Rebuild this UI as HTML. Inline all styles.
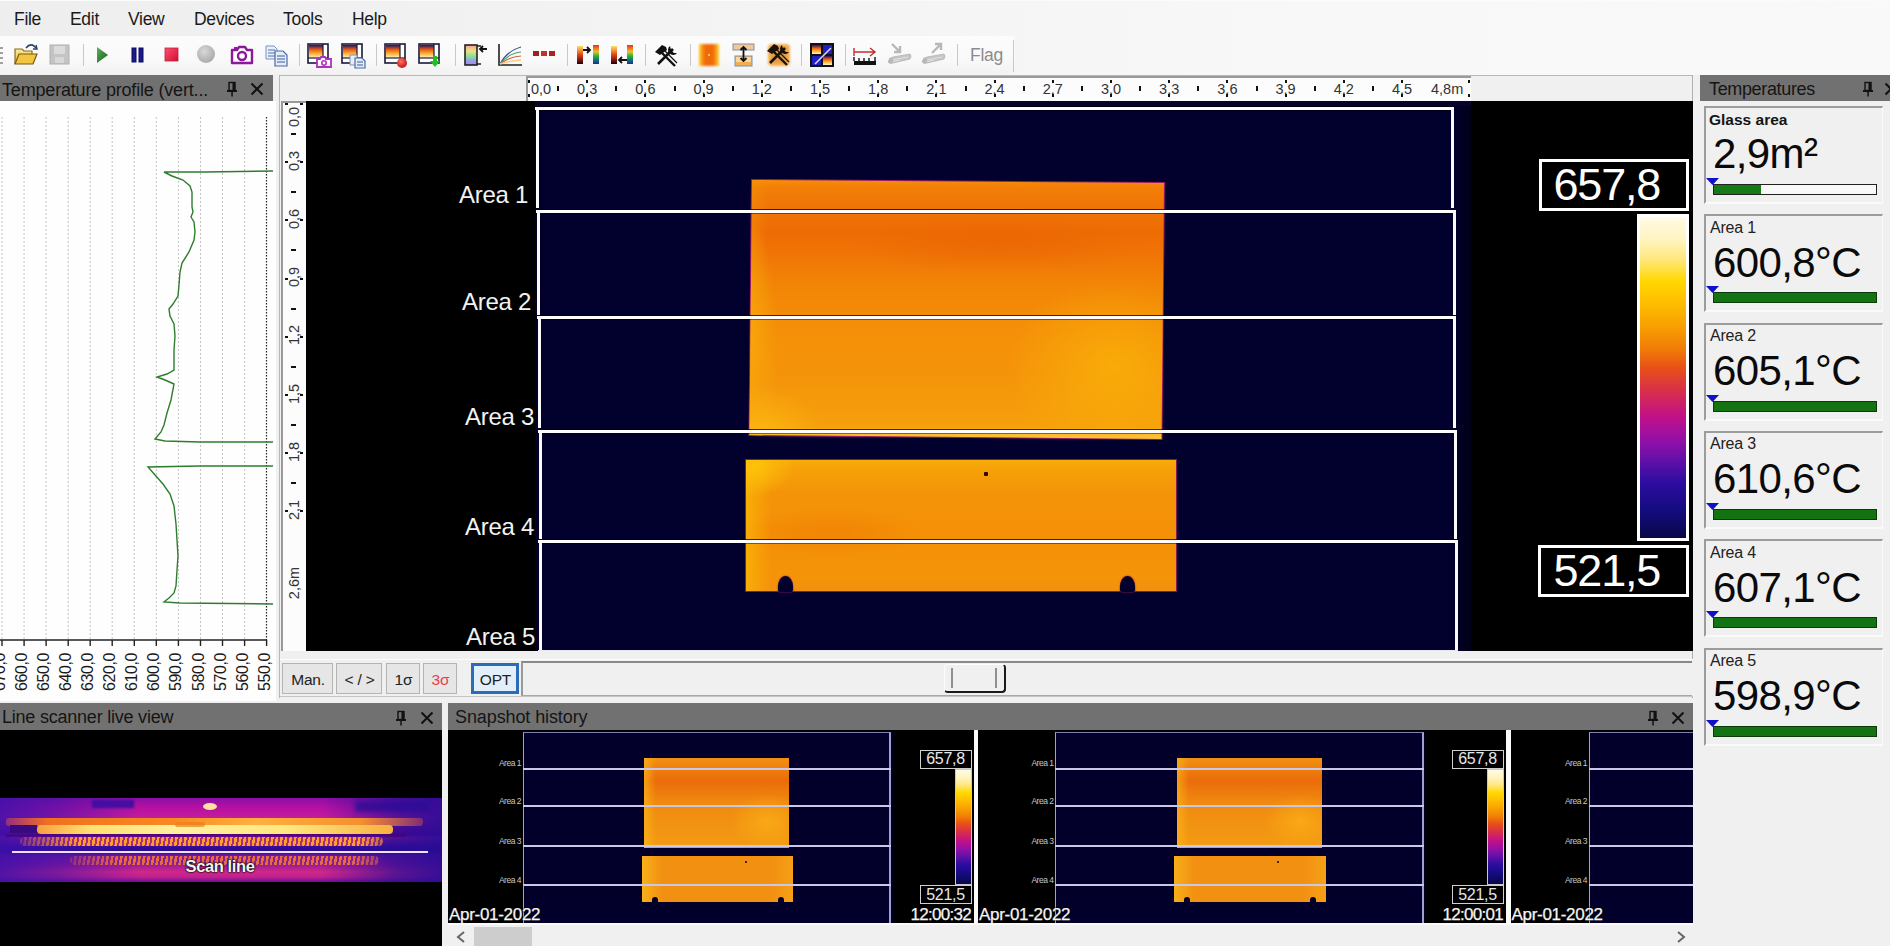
<!DOCTYPE html>
<html><head><meta charset="utf-8"><title>Thermal line scanner</title>
<style>
html,body{margin:0;padding:0;}
body{width:1890px;height:946px;overflow:hidden;position:relative;background:#f0f0f0;font-family:"Liberation Sans", sans-serif;}
.r{position:absolute;}
.t{position:absolute;white-space:nowrap;font-family:"Liberation Sans", sans-serif;}
svg{position:absolute;overflow:visible;}
</style></head><body>
<div class="r" style="left:0px;top:0px;width:1890px;height:75px;background:linear-gradient(to right, #eeeeee 0px, #f3f3f3 700px, #f8f8f8 1300px, #f9f9f9 1890px)"></div><div class="r" style="left:0px;top:0px;width:1890px;height:1px;background:#fbfbfb"></div><div class="t" style="left:14.00px;top:11.19px;font-size:17.5px;line-height:17.5px;color:#1a1a1a;letter-spacing:-0.3px;">File</div><div class="t" style="left:70.00px;top:11.19px;font-size:17.5px;line-height:17.5px;color:#1a1a1a;letter-spacing:-0.3px;">Edit</div><div class="t" style="left:128.00px;top:11.19px;font-size:17.5px;line-height:17.5px;color:#1a1a1a;letter-spacing:-0.3px;">View</div><div class="t" style="left:194.00px;top:11.19px;font-size:17.5px;line-height:17.5px;color:#1a1a1a;letter-spacing:-0.3px;">Devices</div><div class="t" style="left:283.00px;top:11.19px;font-size:17.5px;line-height:17.5px;color:#1a1a1a;letter-spacing:-0.3px;">Tools</div><div class="t" style="left:352.00px;top:11.19px;font-size:17.5px;line-height:17.5px;color:#1a1a1a;letter-spacing:-0.3px;">Help</div><svg width="0" height="0" style="position:absolute">
<defs>
<linearGradient id="gThermV" x1="0" y1="0" x2="0" y2="1">
 <stop offset="0" stop-color="#1a0a60"/><stop offset="0.25" stop-color="#e23c10"/>
 <stop offset="0.55" stop-color="#f8a010"/><stop offset="1" stop-color="#fff0a0"/></linearGradient>
<linearGradient id="gThermImg" x1="0" y1="0" x2="0" y2="1">
 <stop offset="0" stop-color="#1c1470"/><stop offset="0.35" stop-color="#f05a10"/>
 <stop offset="0.65" stop-color="#f8b030"/><stop offset="1" stop-color="#fff6d0"/></linearGradient>
<linearGradient id="gIron" x1="0" y1="0" x2="0" y2="1">
 <stop offset="0" stop-color="#ffe060"/><stop offset="0.5" stop-color="#e04010"/><stop offset="1" stop-color="#200010"/></linearGradient>
<linearGradient id="gRain" x1="0" y1="0" x2="0" y2="1">
 <stop offset="0" stop-color="#e03030"/><stop offset="0.35" stop-color="#f0c020"/><stop offset="0.6" stop-color="#20b040"/><stop offset="1" stop-color="#1030a0"/></linearGradient>
<linearGradient id="gRainSoft" x1="0" y1="0" x2="0" y2="1">
 <stop offset="0" stop-color="#f0a0a0"/><stop offset="0.3" stop-color="#f0e080"/><stop offset="0.55" stop-color="#90e090"/><stop offset="0.8" stop-color="#90a0f0"/><stop offset="1" stop-color="#c080e0"/></linearGradient>
<linearGradient id="gOrangeH" x1="0" y1="0" x2="1" y2="0">
 <stop offset="0" stop-color="#ffd030"/><stop offset="0.3" stop-color="#f06a08"/><stop offset="0.7" stop-color="#f06a08"/><stop offset="1" stop-color="#ffd030"/></linearGradient>
<linearGradient id="gFolder" x1="0" y1="0" x2="0" y2="1">
 <stop offset="0" stop-color="#fbe9a0"/><stop offset="1" stop-color="#e8b830"/></linearGradient>
<linearGradient id="gPlay" x1="0" y1="0" x2="1" y2="1">
 <stop offset="0" stop-color="#60b060"/><stop offset="1" stop-color="#106010"/></linearGradient>
<linearGradient id="gStop" x1="0" y1="0" x2="1" y2="1">
 <stop offset="0" stop-color="#ff5070"/><stop offset="1" stop-color="#d01030"/></linearGradient>
<radialGradient id="gRec" cx="0.4" cy="0.35" r="0.7">
 <stop offset="0" stop-color="#d8d8d8"/><stop offset="1" stop-color="#a8a8a8"/></radialGradient>
<radialGradient id="gRedBall" cx="0.4" cy="0.35" r="0.7">
 <stop offset="0" stop-color="#ff7060"/><stop offset="1" stop-color="#c01010"/></radialGradient>
</defs></svg><div class="r" style="left:0px;top:36px;width:1015px;height:38px;background:linear-gradient(to bottom, #fcfcfc 0%, #f9f9f9 60%, #f2f2f2 100%);border-radius:0 3px 3px 0"></div><div class="r" style="left:0px;top:47px;width:3px;height:2px;background:#a0a0a0"></div><div class="r" style="left:0px;top:52px;width:3px;height:2px;background:#a0a0a0"></div><div class="r" style="left:0px;top:57px;width:3px;height:2px;background:#a0a0a0"></div><div class="r" style="left:0px;top:62px;width:3px;height:2px;background:#a0a0a0"></div><svg style="left:13px;top:43px;" width="26" height="24" viewBox="0 0 26 24"><path d="M2 21 L2 6 L9 6 L11 8 L19 8 L19 11" fill="url(#gFolder)" stroke="#8a6a20" stroke-width="1.2"/><path d="M2 21 L6 11 L24 11 L20 21 Z" fill="#f2c640" stroke="#7a5a10" stroke-width="1.2"/><path d="M13 5 Q17 0 21 3 L23 5" fill="none" stroke="#304060" stroke-width="1.6"/><path d="M20 6 L24 6 L23 2" fill="none" stroke="#304060" stroke-width="1.4"/></svg><svg style="left:49px;top:44px;" width="22" height="22" viewBox="0 0 22 22"><rect x="1" y="1" width="19" height="19" fill="#c4c4c4" stroke="#b0b0b0"/><rect x="5" y="2" width="11" height="8" fill="#dcdcdc"/><rect x="6" y="13" width="9" height="6" fill="#d8d8d8"/></svg><div class="r" style="left:83px;top:44px;width:1px;height:22px;background:#c8c8c8"></div><svg style="left:95px;top:45px;" width="16" height="20" viewBox="0 0 16 20"><path d="M2 2 L13 10 L2 18 Z" fill="url(#gPlay)"/></svg><svg style="left:130px;top:46px;" width="16" height="18" viewBox="0 0 16 18"><rect x="2" y="2" width="4" height="14" fill="#1a1a8a" stroke="#0a0a60" stroke-width="1"/><rect x="9" y="2" width="4" height="14" fill="#1a1a8a" stroke="#0a0a60" stroke-width="1"/></svg><svg style="left:163px;top:46px;" width="18" height="18" viewBox="0 0 18 18"><rect x="2" y="2" width="13" height="13" fill="url(#gStop)" stroke="#c02040" stroke-width="0.8"/></svg><svg style="left:196px;top:44px;" width="20" height="20" viewBox="0 0 20 20"><circle cx="10" cy="10" r="9" fill="url(#gRec)"/></svg><svg style="left:229px;top:42px;" width="26" height="24" viewBox="0 0 26 24"><path d="M3 8 L8 8 L10 5 L16 5 L18 8 L23 8 L23 21 L3 21 Z" fill="#fff" stroke="#8a1a9a" stroke-width="2.4" stroke-linejoin="round"/><circle cx="13" cy="14" r="4" fill="none" stroke="#8a1a9a" stroke-width="2.4"/><rect x="5" y="5" width="3" height="2" fill="#8a1a9a"/></svg><svg style="left:265px;top:45px;" width="24" height="22" viewBox="0 0 24 22"><path d="M1 1 L9 1 L12 4 L12 14 L1 14 Z" fill="#eaf0fa" stroke="#7890c0" stroke-width="1"/><path d="M3 5 L10 5 M3 8 L10 8 M3 11 L10 11" stroke="#5070b0" stroke-width="1"/><path d="M10 6 L18 6 L22 10 L22 21 L10 21 Z" fill="#e4ecf8" stroke="#4a6aa8" stroke-width="1.2"/><path d="M12 11 L20 11 M12 14 L20 14 M12 17 L20 17" stroke="#3a5aa0" stroke-width="1.2"/></svg><div class="r" style="left:299px;top:44px;width:1px;height:22px;background:#c8c8c8"></div><svg style="left:307px;top:43px;" width="26" height="26" viewBox="0 0 26 26"><rect x="1" y="1" width="20" height="19" fill="#fff" stroke="#1a1a3a" stroke-width="1.6"/><rect x="2" y="2" width="14" height="13" fill="url(#gThermImg)"/><line x1="16" y1="1" x2="16" y2="15" stroke="#1a1a3a" stroke-width="1.2"/><line x1="1" y1="15" x2="21" y2="15" stroke="#1a1a3a" stroke-width="1.2"/><path d="M10 16 L13 16 L14 14 L18 14 L19 16 L24 16 L24 24 L10 24 Z" fill="#fff" stroke="#b030c0" stroke-width="1.8"/><circle cx="17" cy="20" r="2.2" fill="none" stroke="#b030c0" stroke-width="1.6"/></svg><svg style="left:341px;top:43px;" width="26" height="26" viewBox="0 0 26 26"><rect x="1" y="1" width="20" height="19" fill="#fff" stroke="#1a1a3a" stroke-width="1.6"/><rect x="2" y="2" width="14" height="13" fill="url(#gThermImg)"/><line x1="16" y1="1" x2="16" y2="15" stroke="#1a1a3a" stroke-width="1.2"/><line x1="1" y1="15" x2="21" y2="15" stroke="#1a1a3a" stroke-width="1.2"/><path d="M9 12 L16 12 L16 22 L9 22 Z" fill="#e8eef8" stroke="#7890c0" stroke-width="1"/><path d="M14 15 L21 15 L24 18 L24 25 L14 25 Z" fill="#e4ecf8" stroke="#4a6aa8" stroke-width="1.2"/><path d="M16 19 L22 19 M16 22 L22 22" stroke="#3a5aa0" stroke-width="1"/></svg><div class="r" style="left:376px;top:44px;width:1px;height:22px;background:#c8c8c8"></div><svg style="left:384px;top:43px;" width="26" height="26" viewBox="0 0 26 26"><rect x="1" y="1" width="20" height="19" fill="#fff" stroke="#1a1a3a" stroke-width="1.6"/><rect x="2" y="2" width="14" height="13" fill="url(#gThermImg)"/><line x1="16" y1="1" x2="16" y2="15" stroke="#1a1a3a" stroke-width="1.2"/><line x1="1" y1="15" x2="21" y2="15" stroke="#1a1a3a" stroke-width="1.2"/><circle cx="18" cy="20" r="5" fill="url(#gRedBall)"/></svg><svg style="left:418px;top:43px;" width="26" height="26" viewBox="0 0 26 26"><rect x="1" y="1" width="20" height="19" fill="#fff" stroke="#1a1a3a" stroke-width="1.6"/><rect x="2" y="2" width="14" height="13" fill="url(#gThermImg)"/><line x1="16" y1="1" x2="16" y2="15" stroke="#1a1a3a" stroke-width="1.2"/><line x1="1" y1="15" x2="21" y2="15" stroke="#1a1a3a" stroke-width="1.2"/><path d="M15 13 L19 13 L19 18 L22 18 L17 24 L12 18 L15 18 Z" fill="#20c020"/></svg><div class="r" style="left:455px;top:44px;width:1px;height:22px;background:#c8c8c8"></div><svg style="left:463px;top:43px;" width="26" height="24" viewBox="0 0 26 24"><rect x="2" y="2" width="12" height="20" fill="url(#gRainSoft)" stroke="#222" stroke-width="1.6"/><path d="M14 3 L18 3 M14 21 L18 21" stroke="#222" stroke-width="1.6"/><path d="M24 6 L17 6 M20 3 L17 6 L20 9" fill="none" stroke="#111" stroke-width="1.8"/></svg><svg style="left:497px;top:43px;" width="26" height="24" viewBox="0 0 26 24"><path d="M2 1 L2 22 L25 22" fill="none" stroke="#222" stroke-width="1.6"/><path d="M3 21 Q10 8 24 4" fill="none" stroke="#3050a0" stroke-width="1.2"/><path d="M3 21 Q12 10 24 9" fill="none" stroke="#40a060" stroke-width="1.2"/><path d="M3 21 Q12 14 24 13" fill="none" stroke="#d06040" stroke-width="1.2"/><path d="M3 21 Q12 18 24 17" fill="none" stroke="#f0d080" stroke-width="1.4"/></svg><svg style="left:531px;top:49px;" width="28" height="10" viewBox="0 0 28 10"><rect x="2" y="2" width="6" height="5" fill="#a02020"/><rect x="10" y="2" width="6" height="5" fill="#c03030"/><rect x="18" y="2" width="6" height="5" fill="#b02020"/></svg><div class="r" style="left:567px;top:44px;width:1px;height:22px;background:#c8c8c8"></div><svg style="left:575px;top:43px;" width="28" height="24" viewBox="0 0 28 24"><rect x="2" y="3" width="6" height="18" fill="url(#gIron)"/><rect x="18" y="2" width="6" height="19" fill="url(#gRain)"/><path d="M8 7 L15 7 M12 4 L15 7 L12 10" fill="none" stroke="#111" stroke-width="1.8"/></svg><svg style="left:609px;top:43px;" width="28" height="24" viewBox="0 0 28 24"><rect x="2" y="3" width="6" height="18" fill="url(#gIron)"/><rect x="18" y="2" width="6" height="19" fill="url(#gRain)"/><path d="M18 17 L10 17 M13 14 L10 17 L13 20" fill="none" stroke="#111" stroke-width="1.8"/></svg><div class="r" style="left:645px;top:44px;width:1px;height:22px;background:#c8c8c8"></div><svg style="left:654px;top:43px;" width="26" height="24" viewBox="0 0 26 24"><path d="M7 9 L21 23" stroke="#111" stroke-width="2.4"/><path d="M10 7 L23 20" stroke="#111" stroke-width="1.2"/><path d="M1 9 L8 2 L12 4 L13 7 L6 12 Z" fill="#111"/><path d="M19 6 L4 21" stroke="#111" stroke-width="2.6"/><path d="M16 3 A5 5 0 1 0 23 10 L20 10 L17 7 Z" fill="#111"/></svg><div class="r" style="left:690px;top:44px;width:1px;height:22px;background:#c8c8c8"></div><svg style="left:697px;top:43px;" width="24" height="24" viewBox="0 0 24 24"><rect x="2" y="1" width="20" height="22" fill="url(#gOrangeH)" style="filter:blur(0.8px)"/><rect x="11" y="11" width="2" height="2" fill="#f8c080"/></svg><svg style="left:731px;top:42px;" width="26" height="26" viewBox="0 0 26 26"><rect x="2" y="2" width="21" height="6" fill="#f4c890" stroke="#8090b0" stroke-width="1"/><rect x="4" y="14" width="17" height="10" fill="#f0b050" stroke="#8090b0" stroke-width="1"/><rect x="5" y="15" width="15" height="5" fill="#f8d8a0"/><path d="M12.5 5 L12.5 19 M9.5 8 L12.5 5 L15.5 8 M9.5 16 L12.5 19 L15.5 16" fill="none" stroke="#111" stroke-width="1.8"/></svg><svg style="left:766px;top:42px;" width="26" height="26" viewBox="0 0 26 26"><rect x="2" y="2" width="22" height="22" rx="4" fill="#f4b050" style="filter:blur(1.2px)"/><rect x="5" y="5" width="16" height="16" fill="#d89040" opacity="0.6" style="filter:blur(1px)"/><path d="M7 9 L21 23" stroke="#1a1208" stroke-width="2.4"/><path d="M10 7 L23 20" stroke="#1a1208" stroke-width="1.2"/><path d="M1 9 L8 2 L12 4 L13 7 L6 12 Z" fill="#1a1208"/><path d="M19 6 L4 21" stroke="#1a1208" stroke-width="2.6"/><path d="M16 3 A5 5 0 1 0 23 10 L20 10 L17 7 Z" fill="#1a1208"/></svg><div class="r" style="left:801px;top:44px;width:1px;height:22px;background:#c8c8c8"></div><svg style="left:809px;top:42px;" width="26" height="26" viewBox="0 0 26 26"><rect x="1" y="1" width="24" height="24" fill="#111"/><rect x="3" y="3" width="9" height="9" fill="url(#gThermImg)"/><rect x="14" y="3" width="9" height="9" fill="#2020c0"/><rect x="3" y="14" width="9" height="9" fill="#2020c0"/><rect x="14" y="14" width="9" height="9" fill="url(#gThermImg)"/><path d="M6 22 L22 6" stroke="#e0d0f0" stroke-width="1.6"/></svg><div class="r" style="left:845px;top:44px;width:1px;height:22px;background:#c8c8c8"></div><svg style="left:852px;top:43px;" width="28" height="24" viewBox="0 0 28 24"><path d="M2 5 L2 13 M2 9 L23 9 M18 5 L23 9 L18 13" fill="none" stroke="#c03030" stroke-width="1.4"/><rect x="2" y="18" width="22" height="4" fill="#111"/><path d="M2 14 L2 18 M7 15 L7 18 M12 15 L12 18 M17 15 L17 18 M23 14 L23 18" stroke="#111" stroke-width="1.4"/></svg><svg style="left:886px;top:42px;" width="28" height="26" viewBox="0 0 28 26"><path d="M6 2 L14 10 M14 4 L14 10 L8 10" fill="none" stroke="#b8b8b8" stroke-width="2.4"/><path d="M2 20 Q3 16 7 15 L24 12 Q26 14 24 17 L7 21 Q3 22 2 20 Z" fill="#c6c6c6" stroke="#b4b4b4" stroke-width="0.8"/><path d="M6 18 L22 15 M5 20 L14 18" stroke="#e0e0e0" stroke-width="1"/><ellipse cx="5" cy="18.5" rx="2.2" ry="3" fill="#b8b8b8"/></svg><svg style="left:920px;top:42px;" width="28" height="26" viewBox="0 0 28 26"><path d="M12 11 L21 2 M15 2 L21 2 L21 8" fill="none" stroke="#b8b8b8" stroke-width="2.4"/><path d="M2 20 Q3 16 7 15 L24 12 Q26 14 24 17 L7 21 Q3 22 2 20 Z" fill="#c6c6c6" stroke="#b4b4b4" stroke-width="0.8"/><path d="M6 18 L22 15 M5 20 L14 18" stroke="#e0e0e0" stroke-width="1"/><ellipse cx="5" cy="18.5" rx="2.2" ry="3" fill="#b8b8b8"/></svg><div class="r" style="left:957px;top:44px;width:1px;height:22px;background:#c8c8c8"></div><div class="t" style="left:970.00px;top:47.19px;font-size:17.5px;line-height:17.5px;color:#8c8c8c;letter-spacing:-0.3px;">Flag</div><div class="r" style="left:1013px;top:40px;width:1px;height:32px;background:#c8c8c8"></div><div class="r" style="left:0px;top:75px;width:273px;height:26px;background:#717171"></div><div class="t" style="left:2.00px;top:80.76px;font-size:18px;line-height:18px;color:#151515;letter-spacing:-0.18px;">Temperature profile (vert...</div><svg style="left:226px;top:80px" width="12" height="17" viewBox="0 0 12 17"><rect x="3" y="2.5" width="6" height="8" fill="none" stroke="#111" stroke-width="1.4"/><rect x="6.5" y="2.5" width="2.5" height="8" fill="#111"/><rect x="1" y="10" width="10" height="2" fill="#111"/><rect x="5.3" y="12" width="1.5" height="4.5" fill="#111"/></svg><svg style="left:250px;top:82px" width="14" height="14" viewBox="0 0 14 14"><path d="M1.5 1.5 L12.5 12.5 M12.5 1.5 L1.5 12.5" stroke="#111" stroke-width="2"/></svg><div class="r" style="left:0px;top:101px;width:276px;height:600px;background:#fefefe"></div><svg style="left:0px;top:101px" width="276" height="600" viewBox="0 101 276 600"><line x1="2.0" y1="117" x2="2.0" y2="640" stroke="#c4c4c4" stroke-width="1" stroke-dasharray="2,2"/><line x1="24.1" y1="117" x2="24.1" y2="640" stroke="#c4c4c4" stroke-width="1" stroke-dasharray="2,2"/><line x1="46.1" y1="117" x2="46.1" y2="640" stroke="#c4c4c4" stroke-width="1" stroke-dasharray="2,2"/><line x1="68.2" y1="117" x2="68.2" y2="640" stroke="#c4c4c4" stroke-width="1" stroke-dasharray="2,2"/><line x1="90.2" y1="117" x2="90.2" y2="640" stroke="#c4c4c4" stroke-width="1" stroke-dasharray="2,2"/><line x1="112.2" y1="117" x2="112.2" y2="640" stroke="#c4c4c4" stroke-width="1" stroke-dasharray="2,2"/><line x1="134.3" y1="117" x2="134.3" y2="640" stroke="#c4c4c4" stroke-width="1" stroke-dasharray="2,2"/><line x1="156.3" y1="117" x2="156.3" y2="640" stroke="#c4c4c4" stroke-width="1" stroke-dasharray="2,2"/><line x1="178.4" y1="117" x2="178.4" y2="640" stroke="#c4c4c4" stroke-width="1" stroke-dasharray="2,2"/><line x1="200.5" y1="117" x2="200.5" y2="640" stroke="#c4c4c4" stroke-width="1" stroke-dasharray="2,2"/><line x1="222.5" y1="117" x2="222.5" y2="640" stroke="#c4c4c4" stroke-width="1" stroke-dasharray="2,2"/><line x1="244.6" y1="117" x2="244.6" y2="640" stroke="#c4c4c4" stroke-width="1" stroke-dasharray="2,2"/><line x1="266.5" y1="117" x2="266.5" y2="640" stroke="#222" stroke-width="1.2" stroke-dasharray="1.5,1.5"/><line x1="0" y1="640" x2="267" y2="640" stroke="#222" stroke-width="1.5"/><line x1="2.0" y1="640" x2="2.0" y2="646" stroke="#222" stroke-width="1.4"/><line x1="24.1" y1="640" x2="24.1" y2="646" stroke="#222" stroke-width="1.4"/><line x1="46.1" y1="640" x2="46.1" y2="646" stroke="#222" stroke-width="1.4"/><line x1="68.2" y1="640" x2="68.2" y2="646" stroke="#222" stroke-width="1.4"/><line x1="90.2" y1="640" x2="90.2" y2="646" stroke="#222" stroke-width="1.4"/><line x1="112.2" y1="640" x2="112.2" y2="646" stroke="#222" stroke-width="1.4"/><line x1="134.3" y1="640" x2="134.3" y2="646" stroke="#222" stroke-width="1.4"/><line x1="156.3" y1="640" x2="156.3" y2="646" stroke="#222" stroke-width="1.4"/><line x1="178.4" y1="640" x2="178.4" y2="646" stroke="#222" stroke-width="1.4"/><line x1="200.5" y1="640" x2="200.5" y2="646" stroke="#222" stroke-width="1.4"/><line x1="222.5" y1="640" x2="222.5" y2="646" stroke="#222" stroke-width="1.4"/><line x1="244.6" y1="640" x2="244.6" y2="646" stroke="#222" stroke-width="1.4"/><line x1="266.6" y1="640" x2="266.6" y2="646" stroke="#222" stroke-width="1.4"/><polyline points="273,171 205,172 164,172 172,176 183,180 190,186 192,192 192,207 193,212 191,217 194,222 195,232 194,240 189,252 182,263 180,272 179,285 178,296 173,304 169,309 170,316 174,324 175,336 174,350 174,362 174,370 167,374 157,377 165,380 174,384 171,400 167,413 164,425 161,432 155,439 165,441 200,442 273,442" fill="none" stroke="#2e7d2e" stroke-width="1.4"/><polyline points="273,466 200,466 148,467 155,475 163,484 170,494 174,506 176,524 177,540 178,556 177,570 176,586 174,593 169,598 164,602 180,603 273,604" fill="none" stroke="#2e7d2e" stroke-width="1.4"/></svg><div class="t" style="left:0.0px;top:671.5px;font-size:16px;line-height:16px;color:#1a1a1a;letter-spacing:-0.4px;transform:translate(-50%,-50%) rotate(-90deg);">670,0</div><div class="t" style="left:22.1px;top:671.5px;font-size:16px;line-height:16px;color:#1a1a1a;letter-spacing:-0.4px;transform:translate(-50%,-50%) rotate(-90deg);">660,0</div><div class="t" style="left:44.1px;top:671.5px;font-size:16px;line-height:16px;color:#1a1a1a;letter-spacing:-0.4px;transform:translate(-50%,-50%) rotate(-90deg);">650,0</div><div class="t" style="left:66.2px;top:671.5px;font-size:16px;line-height:16px;color:#1a1a1a;letter-spacing:-0.4px;transform:translate(-50%,-50%) rotate(-90deg);">640,0</div><div class="t" style="left:88.2px;top:671.5px;font-size:16px;line-height:16px;color:#1a1a1a;letter-spacing:-0.4px;transform:translate(-50%,-50%) rotate(-90deg);">630,0</div><div class="t" style="left:110.2px;top:671.5px;font-size:16px;line-height:16px;color:#1a1a1a;letter-spacing:-0.4px;transform:translate(-50%,-50%) rotate(-90deg);">620,0</div><div class="t" style="left:132.3px;top:671.5px;font-size:16px;line-height:16px;color:#1a1a1a;letter-spacing:-0.4px;transform:translate(-50%,-50%) rotate(-90deg);">610,0</div><div class="t" style="left:154.3px;top:671.5px;font-size:16px;line-height:16px;color:#1a1a1a;letter-spacing:-0.4px;transform:translate(-50%,-50%) rotate(-90deg);">600,0</div><div class="t" style="left:176.4px;top:671.5px;font-size:16px;line-height:16px;color:#1a1a1a;letter-spacing:-0.4px;transform:translate(-50%,-50%) rotate(-90deg);">590,0</div><div class="t" style="left:198.5px;top:671.5px;font-size:16px;line-height:16px;color:#1a1a1a;letter-spacing:-0.4px;transform:translate(-50%,-50%) rotate(-90deg);">580,0</div><div class="t" style="left:220.5px;top:671.5px;font-size:16px;line-height:16px;color:#1a1a1a;letter-spacing:-0.4px;transform:translate(-50%,-50%) rotate(-90deg);">570,0</div><div class="t" style="left:242.6px;top:671.5px;font-size:16px;line-height:16px;color:#1a1a1a;letter-spacing:-0.4px;transform:translate(-50%,-50%) rotate(-90deg);">560,0</div><div class="t" style="left:264.6px;top:671.5px;font-size:16px;line-height:16px;color:#1a1a1a;letter-spacing:-0.4px;transform:translate(-50%,-50%) rotate(-90deg);">550,0</div><div class="r" style="left:279px;top:75px;width:1414px;height:623px;background:#f0f0f0;border-left:1px solid #b8b8b8;border-top:1px solid #b8b8b8;box-sizing:border-box"></div><div class="r" style="left:526px;top:76px;width:945px;height:25px;background:#fcfcfc;border-top:2px solid #9a9a9a;border-left:2px solid #9a9a9a;box-sizing:border-box"></div><div class="r" style="left:281px;top:101px;width:25px;height:550px;background:#fcfcfc;border-left:2px solid #9a9a9a;border-top:2px solid #9a9a9a;box-sizing:border-box"></div><div class="r" style="left:1692px;top:75px;width:1px;height:623px;background:#b0b0b0"></div><div class="r" style="left:306px;top:101px;width:1387px;height:550px;background:#000"></div><div class="r" style="left:535px;top:101px;width:936px;height:550px;background:linear-gradient(to right, #020024 0px, #02002c 10px, #02002c 918px, #010018 936px)"></div><div class="r" style="left:535px;top:101px;width:936px;height:5px;background:#06042a"></div><div class="t" style="left:541.00px;top:81.73px;font-size:14.5px;line-height:14.5px;color:#333;transform:translateX(-50%);">0,0</div><div class="r" style="left:528px;top:80px;width:2px;height:3px;background:#111"></div><div class="r" style="left:528px;top:94px;width:2px;height:3px;background:#111"></div><div class="r" style="left:557px;top:86px;width:2px;height:5px;background:#111"></div><div class="t" style="left:587.20px;top:81.73px;font-size:14.5px;line-height:14.5px;color:#333;transform:translateX(-50%);">0,3</div><div class="r" style="left:586px;top:80px;width:2px;height:3px;background:#111"></div><div class="r" style="left:586px;top:94px;width:2px;height:3px;background:#111"></div><div class="r" style="left:615px;top:86px;width:2px;height:5px;background:#111"></div><div class="t" style="left:645.40px;top:81.73px;font-size:14.5px;line-height:14.5px;color:#333;transform:translateX(-50%);">0,6</div><div class="r" style="left:644px;top:80px;width:2px;height:3px;background:#111"></div><div class="r" style="left:644px;top:94px;width:2px;height:3px;background:#111"></div><div class="r" style="left:674px;top:86px;width:2px;height:5px;background:#111"></div><div class="t" style="left:703.60px;top:81.73px;font-size:14.5px;line-height:14.5px;color:#333;transform:translateX(-50%);">0,9</div><div class="r" style="left:703px;top:80px;width:2px;height:3px;background:#111"></div><div class="r" style="left:703px;top:94px;width:2px;height:3px;background:#111"></div><div class="r" style="left:732px;top:86px;width:2px;height:5px;background:#111"></div><div class="t" style="left:761.80px;top:81.73px;font-size:14.5px;line-height:14.5px;color:#333;transform:translateX(-50%);">1,2</div><div class="r" style="left:761px;top:80px;width:2px;height:3px;background:#111"></div><div class="r" style="left:761px;top:94px;width:2px;height:3px;background:#111"></div><div class="r" style="left:790px;top:86px;width:2px;height:5px;background:#111"></div><div class="t" style="left:820.00px;top:81.73px;font-size:14.5px;line-height:14.5px;color:#333;transform:translateX(-50%);">1,5</div><div class="r" style="left:819px;top:80px;width:2px;height:3px;background:#111"></div><div class="r" style="left:819px;top:94px;width:2px;height:3px;background:#111"></div><div class="r" style="left:848px;top:86px;width:2px;height:5px;background:#111"></div><div class="t" style="left:878.20px;top:81.73px;font-size:14.5px;line-height:14.5px;color:#333;transform:translateX(-50%);">1,8</div><div class="r" style="left:877px;top:80px;width:2px;height:3px;background:#111"></div><div class="r" style="left:877px;top:94px;width:2px;height:3px;background:#111"></div><div class="r" style="left:906px;top:86px;width:2px;height:5px;background:#111"></div><div class="t" style="left:936.40px;top:81.73px;font-size:14.5px;line-height:14.5px;color:#333;transform:translateX(-50%);">2,1</div><div class="r" style="left:935px;top:80px;width:2px;height:3px;background:#111"></div><div class="r" style="left:935px;top:94px;width:2px;height:3px;background:#111"></div><div class="r" style="left:965px;top:86px;width:2px;height:5px;background:#111"></div><div class="t" style="left:994.60px;top:81.73px;font-size:14.5px;line-height:14.5px;color:#333;transform:translateX(-50%);">2,4</div><div class="r" style="left:994px;top:80px;width:2px;height:3px;background:#111"></div><div class="r" style="left:994px;top:94px;width:2px;height:3px;background:#111"></div><div class="r" style="left:1023px;top:86px;width:2px;height:5px;background:#111"></div><div class="t" style="left:1052.80px;top:81.73px;font-size:14.5px;line-height:14.5px;color:#333;transform:translateX(-50%);">2,7</div><div class="r" style="left:1052px;top:80px;width:2px;height:3px;background:#111"></div><div class="r" style="left:1052px;top:94px;width:2px;height:3px;background:#111"></div><div class="r" style="left:1081px;top:86px;width:2px;height:5px;background:#111"></div><div class="t" style="left:1111.00px;top:81.73px;font-size:14.5px;line-height:14.5px;color:#333;transform:translateX(-50%);">3,0</div><div class="r" style="left:1110px;top:80px;width:2px;height:3px;background:#111"></div><div class="r" style="left:1110px;top:94px;width:2px;height:3px;background:#111"></div><div class="r" style="left:1139px;top:86px;width:2px;height:5px;background:#111"></div><div class="t" style="left:1169.20px;top:81.73px;font-size:14.5px;line-height:14.5px;color:#333;transform:translateX(-50%);">3,3</div><div class="r" style="left:1168px;top:80px;width:2px;height:3px;background:#111"></div><div class="r" style="left:1168px;top:94px;width:2px;height:3px;background:#111"></div><div class="r" style="left:1197px;top:86px;width:2px;height:5px;background:#111"></div><div class="t" style="left:1227.40px;top:81.73px;font-size:14.5px;line-height:14.5px;color:#333;transform:translateX(-50%);">3,6</div><div class="r" style="left:1226px;top:80px;width:2px;height:3px;background:#111"></div><div class="r" style="left:1226px;top:94px;width:2px;height:3px;background:#111"></div><div class="r" style="left:1256px;top:86px;width:2px;height:5px;background:#111"></div><div class="t" style="left:1285.60px;top:81.73px;font-size:14.5px;line-height:14.5px;color:#333;transform:translateX(-50%);">3,9</div><div class="r" style="left:1285px;top:80px;width:2px;height:3px;background:#111"></div><div class="r" style="left:1285px;top:94px;width:2px;height:3px;background:#111"></div><div class="r" style="left:1314px;top:86px;width:2px;height:5px;background:#111"></div><div class="t" style="left:1343.80px;top:81.73px;font-size:14.5px;line-height:14.5px;color:#333;transform:translateX(-50%);">4,2</div><div class="r" style="left:1343px;top:80px;width:2px;height:3px;background:#111"></div><div class="r" style="left:1343px;top:94px;width:2px;height:3px;background:#111"></div><div class="r" style="left:1372px;top:86px;width:2px;height:5px;background:#111"></div><div class="t" style="left:1402.00px;top:81.73px;font-size:14.5px;line-height:14.5px;color:#333;transform:translateX(-50%);">4,5</div><div class="r" style="left:1401px;top:80px;width:2px;height:3px;background:#111"></div><div class="r" style="left:1401px;top:94px;width:2px;height:3px;background:#111"></div><div class="t" style="left:1431.00px;top:81.73px;font-size:14.5px;line-height:14.5px;color:#333;">4,8m</div><div class="r" style="left:1468px;top:80px;width:2px;height:3px;background:#111"></div><div class="r" style="left:1468px;top:94px;width:2px;height:3px;background:#111"></div><div class="t" style="left:293.5px;top:117px;font-size:14.5px;line-height:14.5px;color:#333;transform:translate(-50%,-50%) rotate(-90deg);">0,0</div><div class="r" style="left:291px;top:133px;width:5px;height:2px;background:#111"></div><div class="t" style="left:293.5px;top:160.7px;font-size:14.5px;line-height:14.5px;color:#333;transform:translate(-50%,-50%) rotate(-90deg);">0,3</div><div class="r" style="left:285px;top:161px;width:3px;height:2px;background:#111"></div><div class="r" style="left:300px;top:161px;width:3px;height:2px;background:#111"></div><div class="r" style="left:291px;top:191px;width:5px;height:2px;background:#111"></div><div class="t" style="left:293.5px;top:218.9px;font-size:14.5px;line-height:14.5px;color:#333;transform:translate(-50%,-50%) rotate(-90deg);">0,6</div><div class="r" style="left:285px;top:219px;width:3px;height:2px;background:#111"></div><div class="r" style="left:300px;top:219px;width:3px;height:2px;background:#111"></div><div class="r" style="left:291px;top:249px;width:5px;height:2px;background:#111"></div><div class="t" style="left:293.5px;top:277.1px;font-size:14.5px;line-height:14.5px;color:#333;transform:translate(-50%,-50%) rotate(-90deg);">0,9</div><div class="r" style="left:285px;top:278px;width:3px;height:2px;background:#111"></div><div class="r" style="left:300px;top:278px;width:3px;height:2px;background:#111"></div><div class="r" style="left:291px;top:308px;width:5px;height:2px;background:#111"></div><div class="t" style="left:293.5px;top:335.3px;font-size:14.5px;line-height:14.5px;color:#333;transform:translate(-50%,-50%) rotate(-90deg);">1,2</div><div class="r" style="left:285px;top:336px;width:3px;height:2px;background:#111"></div><div class="r" style="left:300px;top:336px;width:3px;height:2px;background:#111"></div><div class="r" style="left:291px;top:366px;width:5px;height:2px;background:#111"></div><div class="t" style="left:293.5px;top:393.5px;font-size:14.5px;line-height:14.5px;color:#333;transform:translate(-50%,-50%) rotate(-90deg);">1,5</div><div class="r" style="left:285px;top:394px;width:3px;height:2px;background:#111"></div><div class="r" style="left:300px;top:394px;width:3px;height:2px;background:#111"></div><div class="r" style="left:291px;top:424px;width:5px;height:2px;background:#111"></div><div class="t" style="left:293.5px;top:451.70000000000005px;font-size:14.5px;line-height:14.5px;color:#333;transform:translate(-50%,-50%) rotate(-90deg);">1,8</div><div class="r" style="left:285px;top:452px;width:3px;height:2px;background:#111"></div><div class="r" style="left:300px;top:452px;width:3px;height:2px;background:#111"></div><div class="r" style="left:291px;top:482px;width:5px;height:2px;background:#111"></div><div class="t" style="left:293.5px;top:509.9000000000001px;font-size:14.5px;line-height:14.5px;color:#333;transform:translate(-50%,-50%) rotate(-90deg);">2,1</div><div class="r" style="left:285px;top:510px;width:3px;height:2px;background:#111"></div><div class="r" style="left:300px;top:510px;width:3px;height:2px;background:#111"></div><div class="r" style="left:285px;top:103px;width:3px;height:2px;background:#111"></div><div class="r" style="left:300px;top:103px;width:3px;height:2px;background:#111"></div><div class="t" style="left:293.5px;top:583px;font-size:14.5px;line-height:14.5px;color:#333;transform:translate(-50%,-50%) rotate(-90deg);">2,6m</div><div class="r" style="left:747px;top:179px;width:419px;height:262px;background:#9a1a6a;clip-path:polygon(4px 0px, 418px 3px, 415.5px 261px, 1.5px 257px);"></div><div class="r" style="left:748px;top:180px;width:417px;height:260px;background:radial-gradient(ellipse 26% 34% at 88% 72%, rgba(250,176,8,0.85), rgba(250,176,8,0) 100%),radial-gradient(ellipse 60px 45px at 3% 97%, rgba(252,186,16,0.8), rgba(252,186,16,0) 100%),radial-gradient(ellipse 30px 120px at 0% 62%, rgba(250,172,10,0.75), rgba(250,172,10,0) 100%),radial-gradient(ellipse 35% 12% at 60% 24%, rgba(232,96,2,0.5), rgba(232,96,2,0) 100%),linear-gradient(to right, rgba(246,150,10,0.5) 0px, rgba(246,150,10,0) 20px),linear-gradient(to bottom, #f68e08 0%, #f27e06 3%, #f07606 10%, #ee6c04 20%, #f07406 28%, #f28406 40%, #f48e08 55%, #f4940a 75%, #f6a00c 95%, #f9b820 97%, #fcc848 100%);clip-path:polygon(4px 0px, 416px 3px, 413.5px 259px, 1.5px 255px);"></div><div class="r" style="left:745.5px;top:460px;width:430px;height:131px;background:radial-gradient(ellipse 40px 30px at 2% 5%, rgba(255,196,8,0.9), rgba(255,196,8,0) 100%),radial-gradient(ellipse 90px 25px at 20% 55%, rgba(238,120,4,0.5), rgba(238,120,4,0) 100%),linear-gradient(to right, rgba(250,180,8,0.8) 0px, rgba(250,180,8,0) 25px),linear-gradient(to bottom, #f8ac08 0%, #f6a008 8%, #f49408 25%, #f49006 60%, #f49408 90%, #f29010 100%);box-shadow:0 0 0 1px rgba(150,30,100,0.85);"></div><div class="r" style="left:777.5px;top:575.5px;width:15px;height:16.5px;background:#02002c;border-radius:50% 50% 2px 2px / 65% 65% 2px 2px;box-shadow:0 0 1px 0.5px rgba(160,30,90,0.7)"></div><div class="r" style="left:1120.0px;top:575.5px;width:15px;height:16.5px;background:#02002c;border-radius:50% 50% 2px 2px / 65% 65% 2px 2px;box-shadow:0 0 1px 0.5px rgba(160,30,90,0.7)"></div><div class="r" style="left:983.5px;top:471.5px;width:4px;height:4px;background:#2a0806;border-radius:1px"></div><div class="r" style="left:535px;top:106.0px;width:919px;height:1.5px;background:rgba(0,0,0,0.75)"></div><div class="r" style="left:535px;top:110.0px;width:919px;height:1.2px;background:rgba(0,0,0,0.45)"></div><div class="r" style="left:535px;top:107.0px;width:919px;height:3px;background:#fdfdff"></div><div class="r" style="left:535.5px;top:107.0px;width:3.5px;height:101.0px;background:#fbfbff"></div><div class="r" style="left:1450.5px;top:107.0px;width:3.5px;height:101.0px;background:#fbfbff"></div><div class="r" style="left:536px;top:208.5px;width:920px;height:1.5px;background:rgba(0,0,0,0.75)"></div><div class="r" style="left:536px;top:212.5px;width:920px;height:1.2px;background:rgba(0,0,0,0.45)"></div><div class="r" style="left:536px;top:209.5px;width:920px;height:3px;background:#fdfdff"></div><div class="r" style="left:536.5px;top:209.5px;width:3.5px;height:105.30000000000001px;background:#fbfbff"></div><div class="r" style="left:1452.5px;top:209.5px;width:3.5px;height:105.30000000000001px;background:#fbfbff"></div><div class="r" style="left:537px;top:315.3px;width:919px;height:1.5px;background:rgba(0,0,0,0.75)"></div><div class="r" style="left:537px;top:319.3px;width:919px;height:1.2px;background:rgba(0,0,0,0.45)"></div><div class="r" style="left:537px;top:316.3px;width:919px;height:3px;background:#fdfdff"></div><div class="r" style="left:537.5px;top:316.3px;width:3.5px;height:111.69999999999999px;background:#fbfbff"></div><div class="r" style="left:1452.5px;top:316.3px;width:3.5px;height:111.69999999999999px;background:#fbfbff"></div><div class="r" style="left:538px;top:428.5px;width:919px;height:1.5px;background:rgba(0,0,0,0.75)"></div><div class="r" style="left:538px;top:432.5px;width:919px;height:1.2px;background:rgba(0,0,0,0.45)"></div><div class="r" style="left:538px;top:429.5px;width:919px;height:3px;background:#fdfdff"></div><div class="r" style="left:538.5px;top:429.5px;width:3.5px;height:109.0px;background:#fbfbff"></div><div class="r" style="left:1453.5px;top:429.5px;width:3.5px;height:109.0px;background:#fbfbff"></div><div class="r" style="left:538px;top:539.0px;width:920px;height:1.5px;background:rgba(0,0,0,0.75)"></div><div class="r" style="left:538px;top:543.0px;width:920px;height:1.2px;background:rgba(0,0,0,0.45)"></div><div class="r" style="left:538px;top:540.0px;width:920px;height:3px;background:#fdfdff"></div><div class="r" style="left:538.5px;top:540.0px;width:3.5px;height:110.0px;background:#fbfbff"></div><div class="r" style="left:1454.5px;top:540.0px;width:3.5px;height:110.0px;background:#fbfbff"></div><div class="r" style="left:538px;top:649.5px;width:920px;height:1.5px;background:#e8e8f0"></div><div class="t" style="left:528.00px;top:183.18px;font-size:24px;line-height:24px;color:#f2f2f2;transform:translateX(-100%);letter-spacing:-0.3px;text-shadow:0 0 1px #000;">Area 1</div><div class="t" style="left:531.00px;top:289.68px;font-size:24px;line-height:24px;color:#f2f2f2;transform:translateX(-100%);letter-spacing:-0.3px;text-shadow:0 0 1px #000;">Area 2</div><div class="t" style="left:534.00px;top:405.18px;font-size:24px;line-height:24px;color:#f2f2f2;transform:translateX(-100%);letter-spacing:-0.3px;text-shadow:0 0 1px #000;">Area 3</div><div class="t" style="left:534.00px;top:515.18px;font-size:24px;line-height:24px;color:#f2f2f2;transform:translateX(-100%);letter-spacing:-0.3px;text-shadow:0 0 1px #000;">Area 4</div><div class="t" style="left:535.00px;top:624.68px;font-size:24px;line-height:24px;color:#f2f2f2;transform:translateX(-100%);letter-spacing:-0.3px;text-shadow:0 0 1px #000;">Area 5</div><div class="r" style="left:1539px;top:159px;width:150px;height:52px;background:#000;border:3px solid #fff;box-sizing:border-box"></div><div class="t" style="left:1553.50px;top:162.41px;font-size:45px;line-height:45px;color:#fff;letter-spacing:-1.2px;">657,8</div><div class="r" style="left:1637px;top:214px;width:52px;height:327px;background:linear-gradient(to bottom, #fffbe6 0%, #fff4c0 7%, #ffe880 13%, #ffd800 20%, #ffc000 26%, #f8a000 34%, #f07a08 41.5%, #e85018 47%, #d83048 54%, #c0108a 62.5%, #9010a8 70%, #6010a8 76%, #2c0ca0 83%, #140c80 91%, #080848 100%);border:3px solid #fff;box-sizing:border-box"></div><div class="r" style="left:1538px;top:545px;width:151px;height:52px;background:#000;border:3px solid #fff;box-sizing:border-box"></div><div class="t" style="left:1553.50px;top:548.41px;font-size:45px;line-height:45px;color:#fff;letter-spacing:-1.2px;">521,5</div><div class="r" style="left:280px;top:659px;width:1413px;height:38px;background:#f0f0f0;border-top:1px solid #fdfdfd;border-bottom:1px solid #c4c4c4;box-sizing:border-box"></div><div class="r" style="left:282px;top:663px;width:51px;height:31px;background:#e6e6e6;border:1px solid #b4b4b4;box-sizing:border-box"></div><div class="t" style="left:308.00px;top:672.38px;font-size:15.5px;line-height:15.5px;color:#222;transform:translateX(-50%);letter-spacing:-0.2px;">Man.</div><div class="r" style="left:336px;top:663px;width:46px;height:31px;background:#e6e6e6;border:1px solid #b4b4b4;box-sizing:border-box"></div><div class="t" style="left:359.50px;top:672.38px;font-size:15.5px;line-height:15.5px;color:#222;transform:translateX(-50%);letter-spacing:-0.2px;">&lt; / &gt;</div><div class="r" style="left:386px;top:663px;width:34px;height:31px;background:#e6e6e6;border:1px solid #b4b4b4;box-sizing:border-box"></div><div class="t" style="left:403.50px;top:672.38px;font-size:15.5px;line-height:15.5px;color:#222;transform:translateX(-50%);letter-spacing:-0.2px;">1σ</div><div class="r" style="left:423px;top:663px;width:34px;height:31px;background:#e6e6e6;border:1px solid #b4b4b4;box-sizing:border-box"></div><div class="t" style="left:440.50px;top:672.38px;font-size:15.5px;line-height:15.5px;color:#e8404a;transform:translateX(-50%);letter-spacing:-0.2px;">3σ</div><div class="r" style="left:471px;top:663px;width:48px;height:31px;background:#e2eefa;border:3px solid #2a6cb8;box-sizing:border-box"></div><div class="t" style="left:495.50px;top:672.38px;font-size:15.5px;line-height:15.5px;color:#222;transform:translateX(-50%);letter-spacing:-0.2px;">OPT</div><div class="r" style="left:521px;top:661px;width:1171px;height:35px;background:#f0f0f0;border-top:2px solid #8a8a8a;border-left:2px solid #9a9a9a;border-bottom:1px solid #a8a8a8;box-sizing:border-box"></div><div class="r" style="left:944px;top:664px;width:62px;height:29px;background:#f0f0f0;border-top:1px solid #fcfcfc;border-left:1px solid #fcfcfc;border-right:2.5px solid #1a1a1a;border-bottom:2.5px solid #1a1a1a;border-radius:4px;box-sizing:border-box"></div><div class="r" style="left:951px;top:668px;width:1.5px;height:20px;background:#909090"></div><div class="r" style="left:995px;top:668px;width:1.5px;height:20px;background:#909090"></div><div class="r" style="left:1693px;top:75px;width:197px;height:871px;background:#f0f0f0"></div><div class="r" style="left:1700px;top:75px;width:190px;height:26px;background:#717171"></div><div class="t" style="left:1709.00px;top:80.26px;font-size:18px;line-height:18px;color:#151515;letter-spacing:-0.35px;">Temperatures</div><svg style="left:1862px;top:80px" width="12" height="17" viewBox="0 0 12 17"><rect x="3" y="2.5" width="6" height="8" fill="none" stroke="#111" stroke-width="1.4"/><rect x="6.5" y="2.5" width="2.5" height="8" fill="#111"/><rect x="1" y="10" width="10" height="2" fill="#111"/><rect x="5.3" y="12" width="1.5" height="4.5" fill="#111"/></svg><svg style="left:1884px;top:82px" width="14" height="14" viewBox="0 0 14 14"><path d="M1.5 1.5 L12.5 12.5 M12.5 1.5 L1.5 12.5" stroke="#111" stroke-width="2"/></svg><div class="r" style="left:1704px;top:106.0px;width:179px;height:98px;background:#f0f0f0;border-top:2px solid #9c9c9c;border-left:2px solid #9c9c9c;border-right:1px solid #fafafa;border-bottom:2px solid #fafafa;box-sizing:border-box"></div><div class="t" style="left:1709.00px;top:111.88px;font-size:15.5px;line-height:15.5px;color:#151515;font-weight:bold;">Glass area</div><div class="t" style="left:1713.00px;top:133.45px;font-size:42px;line-height:42px;color:#0a0a0a;letter-spacing:-0.6px;">2,9m²</div><div class="r" style="left:1713px;top:184.0px;width:164px;height:11px;background:#f8f8f8;border:1.5px solid #222;box-sizing:border-box"></div><div class="r" style="left:1714px;top:185.0px;width:47px;height:9px;background:#157a15"></div><svg style="left:1706px;top:178.0px" width="14" height="7" viewBox="0 0 14 7"><path d="M0 0 L13 0 L6.5 7 Z" fill="#1010c8"/></svg><div class="r" style="left:1704px;top:214.3px;width:179px;height:98px;background:#f0f0f0;border-top:2px solid #9c9c9c;border-left:2px solid #9c9c9c;border-right:1px solid #fafafa;border-bottom:2px solid #fafafa;box-sizing:border-box"></div><div class="t" style="left:1710.00px;top:219.76px;font-size:16px;line-height:16px;color:#222;letter-spacing:-0.2px;">Area 1</div><div class="t" style="left:1713.00px;top:241.75px;font-size:42px;line-height:42px;color:#0a0a0a;letter-spacing:-0.6px;">600,8°C</div><div class="r" style="left:1713px;top:292.3px;width:164px;height:11px;background:#137313;border:1.5px solid #0b3a0b;box-sizing:border-box"></div><svg style="left:1706px;top:286.3px" width="14" height="7" viewBox="0 0 14 7"><path d="M0 0 L13 0 L6.5 7 Z" fill="#1010c8"/></svg><div class="r" style="left:1704px;top:322.6px;width:179px;height:98px;background:#f0f0f0;border-top:2px solid #9c9c9c;border-left:2px solid #9c9c9c;border-right:1px solid #fafafa;border-bottom:2px solid #fafafa;box-sizing:border-box"></div><div class="t" style="left:1710.00px;top:328.06px;font-size:16px;line-height:16px;color:#222;letter-spacing:-0.2px;">Area 2</div><div class="t" style="left:1713.00px;top:350.05px;font-size:42px;line-height:42px;color:#0a0a0a;letter-spacing:-0.6px;">605,1°C</div><div class="r" style="left:1713px;top:400.6px;width:164px;height:11px;background:#137313;border:1.5px solid #0b3a0b;box-sizing:border-box"></div><svg style="left:1706px;top:394.6px" width="14" height="7" viewBox="0 0 14 7"><path d="M0 0 L13 0 L6.5 7 Z" fill="#1010c8"/></svg><div class="r" style="left:1704px;top:430.9px;width:179px;height:98px;background:#f0f0f0;border-top:2px solid #9c9c9c;border-left:2px solid #9c9c9c;border-right:1px solid #fafafa;border-bottom:2px solid #fafafa;box-sizing:border-box"></div><div class="t" style="left:1710.00px;top:436.36px;font-size:16px;line-height:16px;color:#222;letter-spacing:-0.2px;">Area 3</div><div class="t" style="left:1713.00px;top:458.35px;font-size:42px;line-height:42px;color:#0a0a0a;letter-spacing:-0.6px;">610,6°C</div><div class="r" style="left:1713px;top:508.9px;width:164px;height:11px;background:#137313;border:1.5px solid #0b3a0b;box-sizing:border-box"></div><svg style="left:1706px;top:502.9px" width="14" height="7" viewBox="0 0 14 7"><path d="M0 0 L13 0 L6.5 7 Z" fill="#1010c8"/></svg><div class="r" style="left:1704px;top:539.2px;width:179px;height:98px;background:#f0f0f0;border-top:2px solid #9c9c9c;border-left:2px solid #9c9c9c;border-right:1px solid #fafafa;border-bottom:2px solid #fafafa;box-sizing:border-box"></div><div class="t" style="left:1710.00px;top:544.66px;font-size:16px;line-height:16px;color:#222;letter-spacing:-0.2px;">Area 4</div><div class="t" style="left:1713.00px;top:566.65px;font-size:42px;line-height:42px;color:#0a0a0a;letter-spacing:-0.6px;">607,1°C</div><div class="r" style="left:1713px;top:617.2px;width:164px;height:11px;background:#137313;border:1.5px solid #0b3a0b;box-sizing:border-box"></div><svg style="left:1706px;top:611.2px" width="14" height="7" viewBox="0 0 14 7"><path d="M0 0 L13 0 L6.5 7 Z" fill="#1010c8"/></svg><div class="r" style="left:1704px;top:647.5px;width:179px;height:98px;background:#f0f0f0;border-top:2px solid #9c9c9c;border-left:2px solid #9c9c9c;border-right:1px solid #fafafa;border-bottom:2px solid #fafafa;box-sizing:border-box"></div><div class="t" style="left:1710.00px;top:652.96px;font-size:16px;line-height:16px;color:#222;letter-spacing:-0.2px;">Area 5</div><div class="t" style="left:1713.00px;top:674.95px;font-size:42px;line-height:42px;color:#0a0a0a;letter-spacing:-0.6px;">598,9°C</div><div class="r" style="left:1713px;top:725.5px;width:164px;height:11px;background:#137313;border:1.5px solid #0b3a0b;box-sizing:border-box"></div><svg style="left:1706px;top:719.5px" width="14" height="7" viewBox="0 0 14 7"><path d="M0 0 L13 0 L6.5 7 Z" fill="#1010c8"/></svg><div class="r" style="left:0px;top:703px;width:442px;height:27px;background:#717171"></div><div class="t" style="left:2.00px;top:708.26px;font-size:18px;line-height:18px;color:#151515;letter-spacing:-0.22px;">Line scanner live view</div><svg style="left:395px;top:709px" width="12" height="17" viewBox="0 0 12 17"><rect x="3" y="2.5" width="6" height="8" fill="none" stroke="#111" stroke-width="1.4"/><rect x="6.5" y="2.5" width="2.5" height="8" fill="#111"/><rect x="1" y="10" width="10" height="2" fill="#111"/><rect x="5.3" y="12" width="1.5" height="4.5" fill="#111"/></svg><svg style="left:420px;top:711px" width="14" height="14" viewBox="0 0 14 14"><path d="M1.5 1.5 L12.5 12.5 M12.5 1.5 L1.5 12.5" stroke="#111" stroke-width="2"/></svg><div class="r" style="left:0px;top:730px;width:442px;height:216px;background:#000"></div><div class="r" style="left:0px;top:798px;width:442px;height:84px;background:linear-gradient(to right, rgba(60,16,170,0.85) 0px, rgba(60,16,170,0.55) 60px, rgba(60,16,170,0) 140px),linear-gradient(to left, rgba(40,12,150,0.9) 0px, rgba(40,12,150,0.7) 45px, rgba(40,12,150,0) 120px),linear-gradient(to bottom, #8a10a8 0px, #b010a0 8px, #c018a0 16px, #c02090 20px, #600090 36px, #a02090 40px, #3a0c98 48px, #2a0a90 53px, #7018a0 58px, #9a1898 66px, #d02888 74px, #c02090 79px, #6a1098 84px)"></div><div class="r" style="left:92px;top:800px;width:42px;height:8px;background:rgba(48,14,160,0.8);filter:blur(1px)"></div><div class="r" style="left:355px;top:801px;width:75px;height:11px;background:rgba(40,12,150,0.75);filter:blur(2px)"></div><div class="r" style="left:6px;top:818px;width:417px;height:7.5px;border-radius:3px;background:linear-gradient(to right, rgba(230,80,80,0.45) 0%, #f07020 10%, #f88a20 40%, #ffb040 60%, #f49030 85%, rgba(240,100,60,0.35) 100%)"></div><div class="r" style="left:10px;top:825px;width:27px;height:8px;background:#380a80"></div><div class="r" style="left:37px;top:825px;width:356px;height:9px;border-radius:4px;background:linear-gradient(to right, #f8a040 0%, #ffe070 15%, #fff0a0 40%, #ffe880 70%, #f8b040 100%)"></div><div class="r" style="left:175px;top:822px;width:30px;height:5px;border-radius:3px;background:#e8801c;opacity:0.7"></div><div class="r" style="left:6px;top:834px;width:400px;height:3px;background:rgba(70,0,120,0.6)"></div><div class="r" style="left:20px;top:837px;width:363px;height:9px;border-radius:4px;background:repeating-linear-gradient(100deg, #f8a030 0px, #f8a030 2.5px, #b02878 2.5px, #b02878 4.5px);-webkit-mask-image:linear-gradient(to right, rgba(0,0,0,0.25) 0px, #000 60px, #000 340px, rgba(0,0,0,0.6) 363px)"></div><div class="r" style="left:70px;top:856px;width:309px;height:9px;border-radius:4px;background:repeating-linear-gradient(100deg, #e86a40 0px, #e86a40 2.5px, #8a2090 2.5px, #8a2090 4.5px);-webkit-mask-image:linear-gradient(to right, rgba(0,0,0,0.3) 0px, #000 50px, #000 280px, rgba(0,0,0,0.5) 309px)"></div><div class="r" style="left:203px;top:803px;width:14px;height:7px;border-radius:50%;background:#ffe0a0"></div><div class="r" style="left:12px;top:850.5px;width:416px;height:2px;background:#f0e0ff"></div><div class="t" style="left:220.00px;top:857.53px;font-size:16.5px;line-height:16.5px;color:#f4f4f4;transform:translateX(-50%);font-weight:bold;letter-spacing:-0.4px;text-shadow:0 0 2px #000,0 0 2px #000,0 0 1px #000;">Scan line</div><div class="r" style="left:448px;top:703px;width:1245px;height:27px;background:#717171"></div><div class="t" style="left:455.00px;top:708.26px;font-size:18px;line-height:18px;color:#151515;letter-spacing:-0.1px;">Snapshot history</div><svg style="left:1647px;top:709px" width="12" height="17" viewBox="0 0 12 17"><rect x="3" y="2.5" width="6" height="8" fill="none" stroke="#111" stroke-width="1.4"/><rect x="6.5" y="2.5" width="2.5" height="8" fill="#111"/><rect x="1" y="10" width="10" height="2" fill="#111"/><rect x="5.3" y="12" width="1.5" height="4.5" fill="#111"/></svg><svg style="left:1671px;top:711px" width="14" height="14" viewBox="0 0 14 14"><path d="M1.5 1.5 L12.5 12.5 M12.5 1.5 L1.5 12.5" stroke="#111" stroke-width="2"/></svg><div class="r" style="left:448px;top:730px;width:1245px;height:192px;background:#f8f8f8"></div><div class="r" style="left:448px;top:730px;width:525.5px;height:193px;background:#000"></div><div class="r" style="left:522.5px;top:732px;width:372.0px;height:191px;background:linear-gradient(to right, #02002a 0px, #02002a 368px, #000 372px)"></div><div class="r" style="left:522.5px;top:732px;width:368.0px;height:191px;background:#02002a;border-left:1.5px solid #a0a0d0;border-right:2px solid #a0a0d0;border-top:1.5px solid #8080b0;box-sizing:border-box"></div><div class="r" style="left:644.0px;top:758px;width:145px;height:90px;background:linear-gradient(to right, rgba(250,180,24,0.7) 0, rgba(250,180,24,0) 12px),radial-gradient(ellipse 25% 30% at 85% 70%, rgba(255,184,24,0.6), rgba(255,184,24,0) 100%),linear-gradient(to bottom,#f29012 0%,#ea6c0a 25%,#f08a10 50%,#f39c14 100%)"></div><div class="r" style="left:641.5px;top:855.5px;width:151.5px;height:46.5px;background:linear-gradient(to right, #f8b018 0, #f29012 20px, #f29012 130px, #f6a016 151px)"></div><div class="r" style="left:651.5px;top:897px;width:6px;height:5px;background:#02002a;border-radius:3px 3px 0 0"></div><div class="r" style="left:777.5px;top:897px;width:6px;height:5px;background:#02002a;border-radius:3px 3px 0 0"></div><div class="r" style="left:744.5px;top:861px;width:2px;height:2px;background:#502010"></div><div class="t" style="left:521.00px;top:758.80px;font-size:8.5px;line-height:8.5px;color:#c8c8c8;transform:translateX(-100%);letter-spacing:-0.5px;">Area 1</div><div class="t" style="left:521.00px;top:796.80px;font-size:8.5px;line-height:8.5px;color:#c8c8c8;transform:translateX(-100%);letter-spacing:-0.5px;">Area 2</div><div class="t" style="left:521.00px;top:836.80px;font-size:8.5px;line-height:8.5px;color:#c8c8c8;transform:translateX(-100%);letter-spacing:-0.5px;">Area 3</div><div class="t" style="left:521.00px;top:875.80px;font-size:8.5px;line-height:8.5px;color:#c8c8c8;transform:translateX(-100%);letter-spacing:-0.5px;">Area 4</div><div class="r" style="left:522.5px;top:768px;width:368.0px;height:2px;background:#c8c8e8"></div><div class="r" style="left:522.5px;top:805px;width:368.0px;height:2px;background:#c8c8e8"></div><div class="r" style="left:522.5px;top:845px;width:368.0px;height:2px;background:#c8c8e8"></div><div class="r" style="left:522.5px;top:884px;width:368.0px;height:2px;background:#c8c8e8"></div><div class="r" style="left:919.5px;top:750px;width:52.5px;height:19px;background:#000;border:1.5px solid #d0d0d0;box-sizing:border-box"></div><div class="t" style="left:945.50px;top:751.46px;font-size:16px;line-height:16px;color:#e8e8e8;transform:translateX(-50%);letter-spacing:-0.3px;">657,8</div><div class="r" style="left:954.5px;top:769px;width:17.5px;height:116px;background:linear-gradient(to bottom, #fffbe6 0%, #fff4c0 7%, #ffe880 13%, #ffd800 20%, #ffc000 26%, #f8a000 34%, #f07a08 41.5%, #e85018 47%, #d83048 54%, #c0108a 62.5%, #9010a8 70%, #6010a8 76%, #2c0ca0 83%, #140c80 91%, #080848 100%);border:1.5px solid #c8c8c8;box-sizing:border-box"></div><div class="r" style="left:919.5px;top:885px;width:52.5px;height:19px;background:#000;border:1.5px solid #d0d0d0;box-sizing:border-box"></div><div class="t" style="left:945.50px;top:887.46px;font-size:16px;line-height:16px;color:#e8e8e8;transform:translateX(-50%);letter-spacing:-0.3px;">521,5</div><div class="t" style="left:971.00px;top:905.61px;font-size:17px;line-height:17px;color:#f4f4f4;transform:translateX(-100%);letter-spacing:-0.7px;-webkit-text-stroke:0.25px #f4f4f4;text-shadow:0 0 2px #000,0 0 1px #000;">12:00:32</div><div class="r" style="left:973.5px;top:730px;width:4.5px;height:193px;background:#fbfbfb"></div><div class="t" style="left:449.00px;top:905.61px;font-size:17px;line-height:17px;color:#f4f4f4;letter-spacing:-0.3px;-webkit-text-stroke:0.25px #f4f4f4;text-shadow:0 0 2px #000,0 0 1px #000;">Apr-01-2022</div><div class="r" style="left:978px;top:730px;width:528px;height:193px;background:#000"></div><div class="r" style="left:1055px;top:732px;width:372.5px;height:191px;background:linear-gradient(to right, #02002a 0px, #02002a 368px, #000 372px)"></div><div class="r" style="left:1055px;top:732px;width:368.5px;height:191px;background:#02002a;border-left:1.5px solid #a0a0d0;border-right:2px solid #a0a0d0;border-top:1.5px solid #8080b0;box-sizing:border-box"></div><div class="r" style="left:1176.5px;top:758px;width:145px;height:90px;background:linear-gradient(to right, rgba(250,180,24,0.7) 0, rgba(250,180,24,0) 12px),radial-gradient(ellipse 25% 30% at 85% 70%, rgba(255,184,24,0.6), rgba(255,184,24,0) 100%),linear-gradient(to bottom,#f29012 0%,#ea6c0a 25%,#f08a10 50%,#f39c14 100%)"></div><div class="r" style="left:1174px;top:855.5px;width:151.5px;height:46.5px;background:linear-gradient(to right, #f8b018 0, #f29012 20px, #f29012 130px, #f6a016 151px)"></div><div class="r" style="left:1184px;top:897px;width:6px;height:5px;background:#02002a;border-radius:3px 3px 0 0"></div><div class="r" style="left:1310px;top:897px;width:6px;height:5px;background:#02002a;border-radius:3px 3px 0 0"></div><div class="r" style="left:1277px;top:861px;width:2px;height:2px;background:#502010"></div><div class="t" style="left:1053.50px;top:758.80px;font-size:8.5px;line-height:8.5px;color:#c8c8c8;transform:translateX(-100%);letter-spacing:-0.5px;">Area 1</div><div class="t" style="left:1053.50px;top:796.80px;font-size:8.5px;line-height:8.5px;color:#c8c8c8;transform:translateX(-100%);letter-spacing:-0.5px;">Area 2</div><div class="t" style="left:1053.50px;top:836.80px;font-size:8.5px;line-height:8.5px;color:#c8c8c8;transform:translateX(-100%);letter-spacing:-0.5px;">Area 3</div><div class="t" style="left:1053.50px;top:875.80px;font-size:8.5px;line-height:8.5px;color:#c8c8c8;transform:translateX(-100%);letter-spacing:-0.5px;">Area 4</div><div class="r" style="left:1055px;top:768px;width:368.5px;height:2px;background:#c8c8e8"></div><div class="r" style="left:1055px;top:805px;width:368.5px;height:2px;background:#c8c8e8"></div><div class="r" style="left:1055px;top:845px;width:368.5px;height:2px;background:#c8c8e8"></div><div class="r" style="left:1055px;top:884px;width:368.5px;height:2px;background:#c8c8e8"></div><div class="r" style="left:1451.5px;top:750px;width:52.5px;height:19px;background:#000;border:1.5px solid #d0d0d0;box-sizing:border-box"></div><div class="t" style="left:1477.50px;top:751.46px;font-size:16px;line-height:16px;color:#e8e8e8;transform:translateX(-50%);letter-spacing:-0.3px;">657,8</div><div class="r" style="left:1486.5px;top:769px;width:17.5px;height:116px;background:linear-gradient(to bottom, #fffbe6 0%, #fff4c0 7%, #ffe880 13%, #ffd800 20%, #ffc000 26%, #f8a000 34%, #f07a08 41.5%, #e85018 47%, #d83048 54%, #c0108a 62.5%, #9010a8 70%, #6010a8 76%, #2c0ca0 83%, #140c80 91%, #080848 100%);border:1.5px solid #c8c8c8;box-sizing:border-box"></div><div class="r" style="left:1451.5px;top:885px;width:52.5px;height:19px;background:#000;border:1.5px solid #d0d0d0;box-sizing:border-box"></div><div class="t" style="left:1477.50px;top:887.46px;font-size:16px;line-height:16px;color:#e8e8e8;transform:translateX(-50%);letter-spacing:-0.3px;">521,5</div><div class="t" style="left:1503.00px;top:905.61px;font-size:17px;line-height:17px;color:#f4f4f4;transform:translateX(-100%);letter-spacing:-0.7px;-webkit-text-stroke:0.25px #f4f4f4;text-shadow:0 0 2px #000,0 0 1px #000;">12:00:01</div><div class="r" style="left:1506px;top:730px;width:4.5px;height:193px;background:#fbfbfb"></div><div class="t" style="left:979.00px;top:905.61px;font-size:17px;line-height:17px;color:#f4f4f4;letter-spacing:-0.3px;-webkit-text-stroke:0.25px #f4f4f4;text-shadow:0 0 2px #000,0 0 1px #000;">Apr-01-2022</div><div class="r" style="left:1510.5px;top:730px;width:182.5px;height:193px;background:#000"></div><div class="r" style="left:1588.5px;top:732px;width:104.5px;height:191px;background:#02002a;border-left:1.5px solid #a0a0d0;border-top:1.5px solid #8080b0;box-sizing:border-box"></div><div class="t" style="left:1587.00px;top:758.80px;font-size:8.5px;line-height:8.5px;color:#c8c8c8;transform:translateX(-100%);letter-spacing:-0.5px;">Area 1</div><div class="t" style="left:1587.00px;top:796.80px;font-size:8.5px;line-height:8.5px;color:#c8c8c8;transform:translateX(-100%);letter-spacing:-0.5px;">Area 2</div><div class="t" style="left:1587.00px;top:836.80px;font-size:8.5px;line-height:8.5px;color:#c8c8c8;transform:translateX(-100%);letter-spacing:-0.5px;">Area 3</div><div class="t" style="left:1587.00px;top:875.80px;font-size:8.5px;line-height:8.5px;color:#c8c8c8;transform:translateX(-100%);letter-spacing:-0.5px;">Area 4</div><div class="r" style="left:1588.5px;top:768px;width:104.5px;height:2px;background:#c8c8e8"></div><div class="r" style="left:1588.5px;top:805px;width:104.5px;height:2px;background:#c8c8e8"></div><div class="r" style="left:1588.5px;top:845px;width:104.5px;height:2px;background:#c8c8e8"></div><div class="r" style="left:1588.5px;top:884px;width:104.5px;height:2px;background:#c8c8e8"></div><div class="t" style="left:1511.50px;top:905.61px;font-size:17px;line-height:17px;color:#f4f4f4;letter-spacing:-0.3px;-webkit-text-stroke:0.25px #f4f4f4;text-shadow:0 0 2px #000,0 0 1px #000;">Apr-01-2022</div><div class="r" style="left:448px;top:923px;width:1245px;height:23px;background:#f0f0f0;border-top:2px solid #fafafa;box-sizing:border-box"></div><div class="r" style="left:474px;top:927px;width:58px;height:19px;background:#cdcdcd"></div><svg style="left:455px;top:930px" width="12" height="14" viewBox="0 0 12 14"><path d="M9 2 L3 7 L9 12" fill="none" stroke="#666" stroke-width="2"/></svg><svg style="left:1675px;top:930px" width="12" height="14" viewBox="0 0 12 14"><path d="M3 2 L9 7 L3 12" fill="none" stroke="#666" stroke-width="2"/></svg>
</body></html>
